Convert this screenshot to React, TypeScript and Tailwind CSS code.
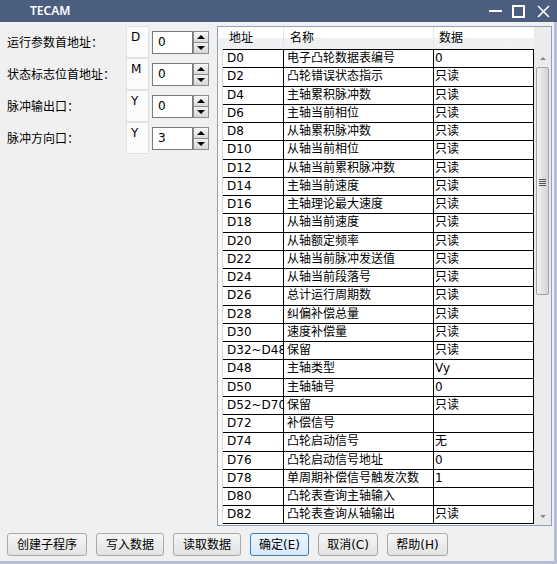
import React from 'react';

const FONT = "font-['DejaVu_Sans','Noto_Sans_CJK_SC',sans-serif]";

const rows: [string, string, string][] = [
  ['D0', '电子凸轮数据表编号', '0'],
  ['D2', '凸轮错误状态指示', '只读'],
  ['D4', '主轴累积脉冲数', '只读'],
  ['D6', '主轴当前相位', '只读'],
  ['D8', '从轴累积脉冲数', '只读'],
  ['D10', '从轴当前相位', '只读'],
  ['D12', '从轴当前累积脉冲数', '只读'],
  ['D14', '主轴当前速度', '只读'],
  ['D16', '主轴理论最大速度', '只读'],
  ['D18', '从轴当前速度', '只读'],
  ['D20', '从轴额定频率', '只读'],
  ['D22', '从轴当前脉冲发送值', '只读'],
  ['D24', '从轴当前段落号', '只读'],
  ['D26', '总计运行周期数', '只读'],
  ['D28', '纠偏补偿总量', '只读'],
  ['D30', '速度补偿量', '只读'],
  ['D32~D48', '保留', '只读'],
  ['D48', '主轴类型', 'Vy'],
  ['D50', '主轴轴号', '0'],
  ['D52~D70', '保留', '只读'],
  ['D72', '补偿信号', ''],
  ['D74', '凸轮启动信号', '无'],
  ['D76', '凸轮启动信号地址', '0'],
  ['D78', '单周期补偿信号触发次数', '1'],
  ['D80', '凸轮表查询主轴输入', ''],
  ['D82', '凸轮表查询从轴输出', '只读'],
];

const fields = [
  { label: '运行参数首地址：', letter: 'D', value: '0' },
  { label: '状态标志位首地址：', letter: 'M', value: '0' },
  { label: '脉冲输出口：', letter: 'Y', value: '0' },
  { label: '脉冲方向口：', letter: 'Y', value: '3' },
];

const buttons = [
  { text: '创建子程序', w: 'w-[80px]' },
  { text: '写入数据', w: 'w-[68px]' },
  { text: '读取数据', w: 'w-[68px]' },
  { text: '确定(E)', w: 'w-[59px]', primary: true },
  { text: '取消(C)', w: 'w-[60px]' },
  { text: '帮助(H)', w: 'w-[61px]' },
];

function SpinBox({ value }: { value: string }) {
  return (
    <div className="flex h-[23px] w-[57px]">
      <div className="flex-1 border border-[#7a7a7a] bg-white pl-[5px] text-[12px] leading-[21px] text-black">
        {value}
      </div>
      <div className="flex w-[16px] flex-col">
        <div className="flex h-[12px] items-center justify-center border border-[#8c8c8c] bg-gradient-to-b from-[#f7f7f7] to-[#dadada]">
          <div className="h-0 w-0 border-x-[4px] border-b-[4px] border-x-transparent border-b-black" />
        </div>
        <div className="flex h-[11px] items-center justify-center border border-t-0 border-[#8c8c8c] bg-gradient-to-b from-[#f2f2f2] to-[#d6d6d6]">
          <div className="h-0 w-0 border-x-[4px] border-t-[4px] border-x-transparent border-t-black" />
        </div>
      </div>
    </div>
  );
}

function Scrollbar() {
  return (
    <div className="flex w-[17px] flex-col bg-[#ebebeb]">
      <div className="h-[22px] bg-[#ececec]" />
      <div className="flex h-[18px] items-center justify-center">
        <div className="h-0 w-0 border-x-[3px] border-b-[3px] border-x-transparent border-b-[#8a8a8a]" />
      </div>
      <div className="mx-[2px] flex h-[228px] items-center justify-center rounded-[2px] border border-[#a3a3a3] bg-gradient-to-r from-[#f3f3f3] via-[#e2e2e2] to-[#d4d4d4]">
        <div className="flex flex-col gap-[1px] pt-[2px]">
          <div className="h-[1px] w-[7px] bg-[#555]" />
          <div className="h-[1px] w-[7px] bg-[#555]" />
          <div className="h-[1px] w-[7px] bg-[#555]" />
          <div className="h-[1px] w-[7px] bg-[#555]" />
        </div>
      </div>
      <div className="flex-1" />
      <div className="flex h-[18px] items-center justify-center">
        <div className="h-0 w-0 border-x-[3px] border-t-[3px] border-x-transparent border-t-[#8a8a8a]" />
      </div>
    </div>
  );
}

function DataTable() {
  return (
    <div className="flex h-[500px] w-[335px] border border-[#8fa1bd] bg-white">
      <div className="flex w-[316px] flex-col overflow-hidden">
        <div className="flex h-[22px] bg-gradient-to-b from-white from-50% to-[#eff1f3] to-50% text-[12px] leading-[22px] text-black">
          <div className="w-[5px]" />
          <div className="w-[61px] border-r border-[#e3e5e8] pl-[6px]">地址</div>
          <div className="w-[150px] border-r border-[#e3e5e8] pl-[6px]">名称</div>
          <div className="w-[100px] pl-[5px]">数据</div>
        </div>
        <div className="flex flex-1">
          <div className="w-[5px] border-r border-[#d9d9d9] bg-[#fafafa]" />
          <div className="flex flex-1 flex-col">
            {rows.map(([addr, name, data], i) => (
              <div
                key={addr + i}
                className={`flex h-[18.25px] shrink-0 items-center border-t border-black text-[12px] leading-[16px] text-black ${i === rows.length - 1 ? 'border-b' : ''}`}
              >
                <div className="h-full w-[61px] overflow-hidden whitespace-nowrap border-r border-black pl-[4px]">{addr}</div>
                <div className="h-full w-[150px] overflow-hidden whitespace-nowrap border-r border-black pl-[3px]">{name}</div>
                <div className="h-full w-[100px] overflow-hidden whitespace-nowrap border-r border-black pl-[1px]">{data}</div>
              </div>
            ))}
          </div>
        </div>
      </div>
      <Scrollbar />
    </div>
  );
}

export default function App() {
  return (
    <div className={`flex h-[564px] w-[557px] flex-col bg-[#f0f0f0] ${FONT}`}>
      <div className="flex h-[22px] shrink-0 items-center bg-[#4b5e80] text-white">
        <div className="pl-[30px] font-['Noto_Sans',sans-serif] text-[12px] font-semibold leading-none">TECAM</div>
        <div className="flex-1" />
        <div className="mr-[10px] h-[2px] w-[13px] bg-white" />
        <div className="mr-[12px] h-[13px] w-[13px] border-2 border-white" />
        <svg width="13" height="13" viewBox="0 0 13 13" className="mr-[7px]">
          <path d="M1 1 L12 12 M12 1 L1 12" stroke="#fff" strokeWidth="1.6" />
        </svg>
      </div>
      <div className="flex flex-1 flex-col border-r-[3px] border-b-[3px] border-[#b8bcd5]">
        <div className="flex pt-[4px]">
          <div className="flex w-[217px] flex-col">
            {fields.map((f, i) => (
              <div key={i} className="flex h-[32px] items-center">
                <div className="w-[126px] pl-[7px] pt-[1px] text-[12px] leading-[18px] text-black">{f.label}</div>
                <div className="h-[32px] w-[23px] border border-[#e2e2e2] bg-[#fbfbfb] pl-[4px] pt-[1px] text-[12px] leading-[18px] text-black">
                  {f.letter}
                </div>
                <div className="ml-[3px] mt-[1px]">
                  <SpinBox value={f.value} />
                </div>
              </div>
            ))}
          </div>
          <DataTable />
        </div>
        <div className="mt-[7px] flex gap-[9px] pl-[7px]">
          {buttons.map((b) => (
            <div
              key={b.text}
              className={`flex h-[23px] ${b.w} items-center justify-center rounded-[3px] border text-[12px] leading-none text-black ${
                b.primary
                  ? 'border-[#3c7fb1] bg-gradient-to-b from-[#eef6fd] to-[#d6e9f9]'
                  : 'border-[#a9a9a9] bg-gradient-to-b from-[#f6f6f6] to-[#e2e2e2]'
              }`}
            >
              {b.text}
            </div>
          ))}
        </div>
      </div>
    </div>
  );
}
